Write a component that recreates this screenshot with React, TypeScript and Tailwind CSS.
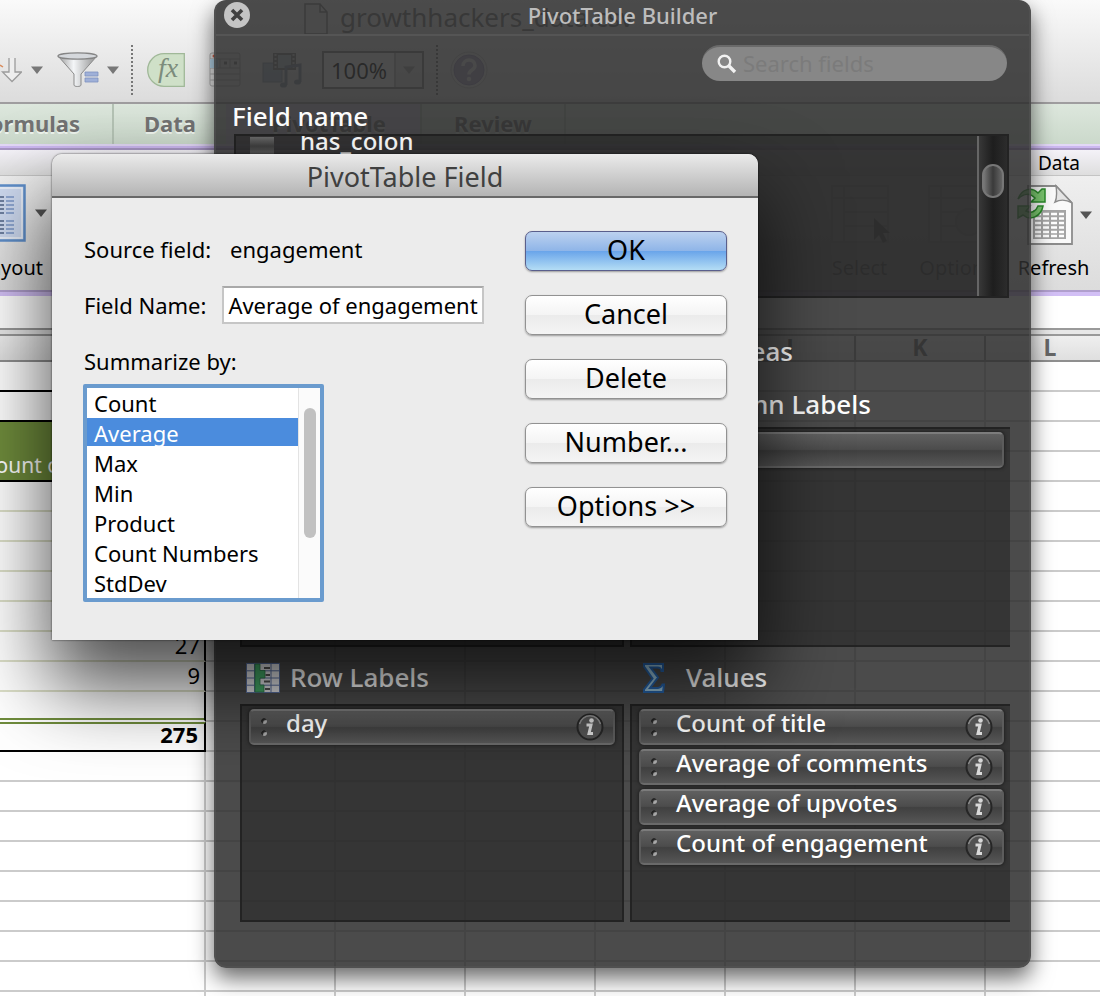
import type { ReactNode } from "react";

function Caret({ className = "" }: { className?: string }) {
  return (
    <svg viewBox="0 0 12 8" className={`h-2 w-3 shrink-0 ${className}`} aria-hidden="true">
      <path d="M0 0.5H12L6 8Z" fill="currentColor" />
    </svg>
  );
}

function SortIcon() {
  return (
    <svg viewBox="0 0 22 26" className="h-[26px] w-[22px] shrink-0" aria-hidden="true">
      <path d="M0 8L3 10" stroke="#d98a5a" strokeWidth="1.500" />
      <path d="M9 1V15H2.500L12 24.500 21.500 15H15V1" fill="#eee" stroke="#9c9c9c" strokeWidth="1.300" />
    </svg>
  );
}

function FunnelIcon() {
  return (
    <svg viewBox="0 0 42 36" className="h-9 w-[42px] shrink-0" aria-hidden="true">
      <defs>
        <linearGradient id="funnel" x1="0" x2="1">
          <stop offset="0" stopColor="#9a9a9a" />
          <stop offset=".4" stopColor="#f4f6f8" />
          <stop offset="1" stopColor="#8f8f8f" />
        </linearGradient>
      </defs>
      <path d="M1 4L17 22v11c0 2 7 2 7 0V22L40 4Z" fill="url(#funnel)" stroke="#8a8a8a" />
      <ellipse cx="20.500" cy="4" rx="19.500" ry="3.200" fill="#d5d8dc" stroke="#858585" strokeWidth="1.300" />
      <path d="M28 20h13v4H28ZM28 26h13v4H28Z" fill="#9fb0d8" stroke="#7f92c0" strokeWidth=".8" />
    </svg>
  );
}

function FxIcon() {
  return (
    <svg viewBox="0 0 38 34" className="h-[34px] w-[38px] shrink-0" aria-hidden="true">
      <path d="M17 .7H37.300V33.300H17A16.300 16.300 0 0 1 17 .7Z" fill="#cfe0c8" stroke="#a0b898" strokeWidth="1.300" />
      <text x="11" y="24" fontFamily="Liberation Serif, serif" fontStyle="italic" fontSize="28" fill="#7c8c7c">fx</text>
    </svg>
  );
}

function CalendarIcon() {
  return (
    <svg viewBox="0 0 32 36" className="h-9 w-8 shrink-0" aria-hidden="true">
      <rect x="1" y="1" width="30" height="33" rx="2" fill="#e4e4e4" stroke="#aaa" />
      <path d="M1 7H31M1 16H31M1 22H31M1 28H31M11 7V16M21 7V16" stroke="#aaa" fill="none" />
      <rect x="1" y="7" width="8" height="9" fill="#b5d4e8" />
      <circle cx="5" cy="4" r="1.500" fill="#d0604a" />
      <path d="M15 11h3M25 11h3" stroke="#777" strokeWidth="3" />
    </svg>
  );
}

function MediaIcon() {
  return (
    <svg viewBox="0 0 40 36" className="h-9 w-10 shrink-0 opacity-65" aria-hidden="true">
      <rect x="1" y="11" width="19" height="19" fill="#8fa5bd" stroke="#66788c" />
      <rect x="11" y="1" width="23" height="17" fill="#555" />
      <rect x="16" y="3" width="13" height="13" fill="#a9bcc8" />
      <path d="M13.500 2V18M31.500 2V18" stroke="#ccc" strokeWidth="2" strokeDasharray="2 2" />
      <path d="M24 33V15L38 13V30" fill="none" stroke="#5a6a86" strokeWidth="3" />
      <ellipse cx="21.500" cy="33" rx="3.500" ry="2.600" fill="#5a6a86" />
      <ellipse cx="35.500" cy="30" rx="3.500" ry="2.600" fill="#5a6a86" />
    </svg>
  );
}

function HelpIcon() {
  return (
    <svg viewBox="0 0 38 38" className="h-[38px] w-[38px] shrink-0" aria-hidden="true">
      <circle cx="19" cy="19" r="18" fill="#e6e6e6" stroke="#c4c4c4" />
      <circle cx="19" cy="19" r="15" fill="#b1a9c8" stroke="#9d94b8" />
      <path d="M13 15c0-8 12-8 12-.5 0 5-6 4-6 9" fill="none" stroke="#f0f0f0" strokeWidth="3.500" />
      <circle cx="19" cy="28" r="2.200" fill="#f0f0f0" />
    </svg>
  );
}

function LayoutIcon() {
  return (
    <svg viewBox="0 0 60 58" className="h-[58px] w-[60px] shrink-0" aria-hidden="true">
      <rect x="1.500" y="1.500" width="57" height="55" fill="#cdd9ef" stroke="#5f8fca" strokeWidth="2.500" />
      <rect x="4" y="4" width="52" height="50" fill="none" stroke="#f0f4fb" strokeWidth="1.500" />
      <path d="M6 13H38M6 17H38M6 21H38M6 25H38M6 29H38M6 37H38M6 41H38M6 45H38M6 49H38" stroke="#6d7f9f" strokeWidth="2" />
      <path d="M40 13H48M40 17H48M40 21H48M40 25H48M40 29H48M40 37H48M40 41H48M40 45H48M40 49H48" stroke="#8ea6d0" strokeWidth="2" />
    </svg>
  );
}

function GridIcon({ children }: { children?: ReactNode }) {
  return (
    <svg viewBox="0 0 60 60" className="h-[60px] w-[60px] shrink-0" aria-hidden="true">
      <path d="M2 2H58V58H2ZM2 14H58M14 2V58M14 28H58M14 42H58" fill="#e6e6e6" stroke="#c2c2c2" strokeWidth="2" />
      {children}
    </svg>
  );
}

function RefreshIcon() {
  return (
    <svg viewBox="0 0 58 62" className="h-[62px] w-[58px] shrink-0" aria-hidden="true">
      <path d="M12 2H40L56 19V60H12Z" fill="#fafafa" stroke="#8c8c8c" strokeWidth="1.800" />
      <path d="M40 2C41 9 41 14 39 18C45 15 51 16 56 19Z" fill="#e4e4e4" stroke="#8c8c8c" strokeWidth="1.400" />
      <rect x="17" y="26" width="33" height="29" fill="#a5a5a5" />
      <path d="M19 30H25M27 30H33M35 30H41M43 30H48M19 34.500H25M27 34.500H33M35 34.500H41M43 34.500H48M19 39H25M27 39H33M35 39H41M43 39H48M19 43.500H25M27 43.500H33M35 43.500H41M43 43.500H48M19 48H25M27 48H33M35 48H41M43 48H48M19 52H25M27 52H33M35 52H41M43 52H48" stroke="#fff" strokeWidth="2.600" />
      <path d="M2 15C6 4 16 3 22 9L26 5L29 5V18H15L19 14C14 9 8 9 2 15Z" fill="#7cc870" stroke="#2b8a2b" strokeWidth="1.500" />
      <path d="M27 22C25 33 14 37 7 31L2 34V22H14L10 27C16 30 20 27 22 22Z" fill="#7cc870" stroke="#2b8a2b" strokeWidth="1.500" />
    </svg>
  );
}

function RowLabelsIcon() {
  return (
    <svg viewBox="0 0 34 30" className="h-[30px] w-[34px] shrink-0" aria-hidden="true">
      <rect x=".5" y=".5" width="33" height="29" fill="#e4e5e8" />
      <path d="M.5 .5H33.500V29.500H.5ZM.5 7.800H33.500M.5 15H33.500M.5 22.200H33.500M8.500 0V30M25 0V30" fill="none" stroke="#5a70a0" strokeWidth="1" />
      <path d="M9 1H14V7.500H19V15H14V22H18V29H9Z" fill="#46ad6a" stroke="#2f7a49" strokeWidth=".8" />
      <path d="M18 5H24M19.500 12H24M18 18.500H24M19 26H24" stroke="#555" strokeWidth="2" />
    </svg>
  );
}

function SigmaIcon() {
  return (
    <svg viewBox="0 0 24 32" className="h-8 w-6 shrink-0" aria-hidden="true">
      <path d="M2 2H21V9H19.500C19 6 18 5.500 15.500 5.500H8.500L16 15.500L8 26H16C18.500 26 19.500 25 20.500 22.500H22L21 30H2V27.500L10.500 16.500L2 4.500Z" fill="#9cc6dd" stroke="#2765ad" strokeWidth="2" />
    </svg>
  );
}

function InfoIcon() {
  return (
    <svg viewBox="0 0 30 30" className="h-[30px] w-[30px]" aria-hidden="true">
      <circle cx="15" cy="15" r="12.500" fill="#525252" stroke="#262626" strokeWidth="2" />
      <path d="M4.500 12A10.800 10.800 0 0 1 25.500 12" fill="none" stroke="#8a8a8a" strokeWidth="1.500" />
      <circle cx="16.500" cy="8.500" r="2.300" fill="#d8d8d8" />
      <path d="M11.500 13H16L14 21.500H18" fill="none" stroke="#d8d8d8" strokeWidth="3" />
    </svg>
  );
}

function Pill({ label }: { label?: string }) {
  return (
    <li className="flex h-9 items-center rounded-[5px] border-2 border-t-[#7c7c7c] border-r-[#5c5c5c] border-b-[#6a6a6a] border-l-[#5c5c5c] bg-[linear-gradient(#606060_0%,#4c4c4c_48%,#404040_52%,#565656_100%)] shadow-[0_0_3px_1px_#222]">
      {label && (
        <>
          <span className="flex w-[35px] shrink-0 flex-col items-start gap-1.5 pl-2.5" aria-hidden="true">
            <span className="size-1.5 rounded-full bg-[#aaa] shadow-[inset_2px_2px_1px_#222]" />
            <span className="size-1.5 rounded-full bg-[#aaa] shadow-[inset_2px_2px_1px_#222]" />
          </span>
          <span className="grow pb-2 text-[24px] leading-6 font-medium text-white">{label}</span>
          <button type="button" aria-label={`Settings for ${label}`} className="mr-2">
            <InfoIcon />
          </button>
        </>
      )}
    </li>
  );
}

function AreaBox({ items, open, tall }: { items: (string | undefined)[]; open?: boolean; tall?: boolean }) {
  return (
    <ul
      className={`flex flex-col gap-1 border-2 border-[#232323] bg-[#292929]/65 pt-[3px] pl-[7px] ${tall ? "h-[220px]" : "h-[218px]"} ${open ? "border-r-0 pr-1.5" : "pr-[7px]"}`}
    >
      {items.map((item, i) => (
        <Pill key={i} label={item} />
      ))}
    </ul>
  );
}

function Toolbar() {
  return (
    <header className="h-[104px] border-b-2 border-[#9f9d9f] bg-linear-to-b from-[#fafafa] to-[#dcdcdc]">
      <div className="flex h-[38px] items-center gap-2 pl-[304px] text-[26px] text-[#777]">
        <svg viewBox="0 0 24 32" className="h-8 w-6" aria-hidden="true">
          <path d="M1 1H16L23 9V31H1ZM16 1V9H23" fill="#f0f0f0" stroke="#888" strokeWidth="1.500" />
        </svg>
        <span className="pb-1 pl-1">growthhackers_data.csv</span>
      </div>
      <div className="flex h-16 items-center">
        <SortIcon />
        <Caret className="ml-[9px] text-[#777]" />
        <div className="ml-3.5">
          <FunnelIcon />
        </div>
        <Caret className="ml-2 text-[#777]" />
        <div className="ml-3 h-[50px] border-l-2 border-dotted border-[#777]" />
        <div className="ml-3.5">
          <FxIcon />
        </div>
        <div className="ml-6">
          <CalendarIcon />
        </div>
        <div className="ml-[21px]">
          <MediaIcon />
        </div>
        <div className="ml-5 flex h-[38px] border-2 border-[#888]">
          <span className="flex w-[70px] items-center justify-center bg-white text-[22px] text-[#111]">100%</span>
          <span className="flex w-7 items-center justify-center border-l-2 border-[#bbb]">
            <Caret className="text-[#aaa]" />
          </span>
        </div>
        <div className="ml-3 h-[50px] border-l-2 border-dotted border-[#777]" />
        <div className="ml-3">
          <HelpIcon />
        </div>
      </div>
    </header>
  );
}

function Ribbon() {
  return (
    <>
      <nav className="flex h-10 items-stretch bg-linear-to-b from-[#dde7dd] to-[#cbd9cb] text-[22px] leading-[38px] font-bold text-[#727272] [text-shadow:0_2px_0_#eef4ee]">
        <a href="#formulas" className="flex w-[114px] justify-end overflow-hidden border-r-2 border-[#b4c2b4] pr-8">Formulas</a>
        <a href="#data" className="flex w-[112px] justify-center">Data</a>
        <a href="#pivottable" className="flex w-[196px] justify-center border-r-2 border-[#b4c2b4] bg-[#d6cde0]">
          <span className="pl-3">PivotTable</span>
        </a>
        <a href="#review" className="flex w-36 justify-center border-r-2 border-[#b4c2b4]">Review</a>
      </nav>
      <div className="h-1.5 border-t-2 border-b-2 border-t-[#e2d8f6] border-b-[#a796c4] bg-[#ccb8f0]" />
      <div className="flex h-[26px] justify-end border-b border-[#c4c4c4] bg-linear-to-b from-[#f4f2f8] to-[#dedede] pr-5 text-[19px] leading-[26px] text-black">
        Data
      </div>
      <div className="flex h-[114px] justify-between overflow-hidden bg-linear-to-b from-[#efefef] to-[#dcdcdc] text-[20px] leading-7">
        <div className="flex w-[47px] flex-col items-end pt-2">
          <div className="flex items-center justify-end gap-[9px]">
            <LayoutIcon />
            <Caret className="text-[#555]" />
          </div>
          <span className="mt-3 pr-1">Layout</span>
        </div>
        <div className="-mr-0.5 flex shrink-0">
          <div className="flex w-[97px] flex-col items-center pt-2 text-[#555]">
            <GridIcon>
              <path d="M44 34V56L49 51L53 59L57 57L53 49H60Z" fill="#666" />
            </GridIcon>
            <span className="mt-2.5">Select</span>
          </div>
          <div className="flex w-[97px] flex-col items-center pt-2 text-[#555]">
            <GridIcon>
              <circle cx="42" cy="38" r="13" fill="#ddd" stroke="#bbb" strokeWidth="2" />
            </GridIcon>
            <span className="mt-2.5">Options</span>
          </div>
          <div className="flex w-[97px] flex-col items-center pt-2">
            <div className="flex items-center gap-1.5">
              <RefreshIcon />
              <Caret className="text-[#555]" />
            </div>
            <span className="mt-2">Refresh</span>
          </div>
        </div>
      </div>
      <div className="h-1.5 border-t-2 border-[#b09fcd] bg-[#d2bff5]" />
    </>
  );
}

const columns = ["", "G", "H", "I", "J", "K", "L"];
const blank = columns.map((_, i) => i);

function Cells() {
  return (
    <>
      {blank.map((i) => (
        <td key={i} className="border-r-2 border-b-2 border-[#cbcbcb]" />
      ))}
    </>
  );
}

const valueCell = "border-r-2 border-b-2 border-r-black border-b-[#dcdfc8] pr-1 text-right align-top text-[22px] leading-[26px]";

function Sheet() {
  const values = ["", "", "", "", "", "27", "9"];
  return (
    <table className="w-[1116px] table-fixed border-separate border-spacing-0">
      <colgroup>
        <col className="w-[206px]" />
        {blank.map((i) => (
          <col key={i} className="w-[130px]" />
        ))}
      </colgroup>
      <thead>
        <tr className="h-[26px] bg-linear-to-b from-[#efefef] to-[#dedede] text-[23px] leading-[22px] text-[#666]">
          <th className="h-[26px] border-r-2 border-b-2 border-[#8f8f8f]" />
          {columns.map((c, i) => (
            <th key={i} className="h-[26px] border-r-2 border-b-2 border-[#8f8f8f] p-0 align-top">{i < 4 ? "" : c}</th>
          ))}
        </tr>
      </thead>
      <tbody>
        <tr className="h-[30px]">
          <td className="border-b-2 border-black" />
          <Cells />
        </tr>
        <tr className="h-[30px]">
          <td className="border-r-2 border-b-2 border-black" />
          <Cells />
        </tr>
        <tr className="h-[30px]">
          <td rowSpan={2} className="border-r-2 border-b-2 border-black bg-[#6f8c3c] p-0 align-bottom text-[21px] leading-[30px] text-white">
            <div className="flex w-[60px] justify-end overflow-hidden whitespace-nowrap">Count o</div>
          </td>
          <Cells />
        </tr>
        <tr className="h-[30px]">
          <Cells />
        </tr>
        {values.map((v, i) => (
          <tr key={i} className="h-[30px]">
            <td className={`${valueCell} py-0`}>{v}</td>
            <Cells />
          </tr>
        ))}
        <tr className="h-[30px]">
          <td className="border-r-2 border-b-2 border-r-black border-b-white shadow-[inset_0_-2px_0_#6f8c3c]" />
          <Cells />
        </tr>
        <tr className="h-[30px]">
          <td className="border-t-2 border-r-2 border-b-2 border-t-[#6f8c3c] border-r-black border-b-black py-0 pr-1.5 text-right align-top text-[22px] leading-5 font-bold">275</td>
          <Cells />
        </tr>
        {blank.concat(7, 8).map((i) => (
          <tr key={i} className="h-[30px]">
            <td className="border-r-2 border-b-2 border-[#cbcbcb]" />
            <Cells />
          </tr>
        ))}
      </tbody>
    </table>
  );
}

function BuilderPanel() {
  return (
    <aside className="absolute top-0 left-[214px] h-[968px] w-[817px] rounded-xl border-x-2 border-b-2 border-[#555]/60 bg-[#2d2d2d]/86 shadow-[0_10px_22px_rgba(0,0,0,0.6)]">
      <div className="flex h-9 items-center border-b-2 border-[#555] pl-2">
        <button type="button" aria-label="Close" className="mb-1">
          <svg viewBox="0 0 26 26" className="size-[26px]" aria-hidden="true">
            <circle cx="13" cy="13" r="13" fill="#c4c4c4" />
            <path d="M8 8L18 18M18 8L8 18" stroke="#404040" strokeWidth="3.600" />
          </svg>
        </button>
        <h2 className="grow pr-[34px] pb-1 text-center text-[22px] leading-8 font-medium text-[#bdbdbd]">PivotTable Builder</h2>
      </div>
      <div className="flex justify-end pt-[9px] pr-[22px]">
        <label className="flex h-9 w-[305px] items-center gap-1.5 rounded-full border-t-2 border-[#6a6a6a] bg-[#878787] pl-[15px]">
          <svg viewBox="0 0 20 20" className="size-5 shrink-0" aria-hidden="true">
            <circle cx="7.500" cy="7.500" r="5.800" fill="none" stroke="#f2f2f2" strokeWidth="2.400" />
            <path d="M12 12L18 18" stroke="#f2f2f2" strokeWidth="3.400" />
          </svg>
          <input aria-label="Search fields" placeholder="Search fields" className="min-w-0 grow bg-transparent pb-0.5 text-[22px] leading-8 outline-none placeholder:text-[#7b7b7b]" />
        </label>
      </div>
      <h3 className="pt-[19px] pb-px pl-4 text-[26px] leading-8 font-medium text-white">Field name</h3>
      <div className="mt-px mr-5 ml-[18px] flex h-[164px] border-2 border-[#232323] bg-[#292929]/65">
        <label className="flex h-[19px] grow items-end gap-[26px] overflow-hidden pl-3.5 text-[24px] leading-7 font-medium text-white">
          <input type="checkbox" className="h-[18px] w-6 appearance-none bg-linear-to-b from-[#6a6a6a] via-[#404040] to-[#5a5a5a]" />
          has_colon
        </label>
        <div className="w-[30px] border-l-2 border-[#666] bg-linear-to-r from-[#383838] via-[#1e1e1e] to-[#2c2c2c] pt-7">
          <div className="mx-auto h-[34px] w-[22px] rounded-full border-2 border-[#777] bg-linear-to-r from-[#777] via-[#3a3a3a] to-[#666]" />
        </div>
      </div>
      <h3 className="w-[577px] pt-[37px] pb-px text-right text-[26px] leading-8 font-medium text-white">Drag fields between areas</h3>
      <div className="grid grid-cols-[384px_380px] gap-x-1.5 pl-6">
        <div className="pt-[59px]">
          <AreaBox items={[]} tall />
        </div>
        <div>
          <h4 className="flex h-[59px] items-center pt-3.5 pl-[58px] text-[26px] font-medium text-white">Column Labels</h4>
          <AreaBox items={[undefined]} open tall />
        </div>
        <h4 className="flex h-[57px] items-center gap-2.5 pt-1 pl-1.5 text-[26px] font-medium text-white">
          <RowLabelsIcon />
          Row Labels
        </h4>
        <h4 className="flex h-[57px] items-center gap-5 pt-1 pl-3 text-[26px] font-medium text-white">
          <SigmaIcon />
          Values
        </h4>
        <AreaBox items={["day"]} />
        <AreaBox items={["Count of title", "Average of comments", "Average of upvotes", "Count of engagement"]} open />
      </div>
    </aside>
  );
}

const functions = ["Count", "Average", "Max", "Min", "Product", "Count Numbers", "StdDev"];

function PushButton({ children, primary }: { children: ReactNode; primary?: boolean }) {
  return (
    <button
      type="button"
      className={`h-10 w-[202px] rounded-[7px] border pb-0.5 text-[27px] leading-9 shadow-[0_1px_2px_rgba(0,0,0,0.35)] ${
        primary
          ? "border-[#5a5f8c] bg-[linear-gradient(#bcd1ef_0%,#8fb5e8_49%,#6aa5ea_51%,#b4ddf5_100%)]"
          : "border-[#929292] bg-[linear-gradient(#ffffff_0%,#f4f4f4_49%,#ebebeb_51%,#f4f4f4_100%)]"
      }`}
    >
      {children}
    </button>
  );
}

function FieldDialog() {
  return (
    <section
      role="dialog"
      aria-label="PivotTable Field"
      className="absolute top-[154px] left-[52px] w-[706px] rounded-t-[10px] bg-[#ececec] shadow-[0_0_2px_rgba(0,0,0,0.8),0_44px_80px_4px_rgba(0,0,0,0.7)]"
    >
      <h1 className="h-11 rounded-t-[10px] border-b-2 border-[#686868] bg-linear-to-b from-[#ebebeb] to-[#b4b4b4] text-center text-[27px] leading-[46px] text-[#404040]">
        PivotTable Field
      </h1>
      <form className="flex justify-between pt-[33px] pr-[31px] pb-[38px] pl-8 text-[22px] leading-7 text-black">
        <div className="flex flex-col">
          <p className="flex gap-[19px] pt-1">
            <span>Source field:</span>
            <span>engagement</span>
          </p>
          <div className="mt-[23px] flex items-center gap-4">
            <label htmlFor="field-name">Field Name:</label>
            <input
              id="field-name"
              defaultValue="Average of engagement"
              className="h-[38px] w-[262px] border-2 border-[#c6c6c6] border-t-[#a9a9a9] bg-white px-1 text-[22px] outline-none"
            />
          </div>
          <label htmlFor="summarize" className="mt-[23px]">Summarize by:</label>
          <div className="mt-[9px] -ml-px flex h-[218px] w-[241px] rounded-xs border-4 border-[#6a9bce] bg-white">
            <select
              id="summarize"
              size={7}
              defaultValue="Average"
              className="h-[210px] grow appearance-none overflow-hidden bg-white outline-none"
            >
              {functions.map((f) => (
                <option
                  key={f}
                  value={f}
                  className="h-[30px] px-[7px] py-0 text-[22px] leading-8 text-black checked:bg-[linear-gradient(#4b8cdd_28px,#ffffff_28px)] checked:[-webkit-text-fill-color:#ffffff]"
                >
                  {f}
                </option>
              ))}
            </select>
            <div className="w-[22px] border-l border-[#e3e3e3] bg-[#fbfbfb] pt-5">
              <div className="mx-auto h-[130px] w-3 rounded-full bg-[#c1c1c1]" />
            </div>
          </div>
        </div>
        <div className="flex flex-col gap-6">
          <PushButton primary>OK</PushButton>
          <PushButton>Cancel</PushButton>
          <PushButton>Delete</PushButton>
          <PushButton>Number...</PushButton>
          <PushButton>Options &gt;&gt;</PushButton>
        </div>
      </form>
    </section>
  );
}

export default function App() {
  return (
    <main className="relative h-screen overflow-hidden bg-white font-['Noto_Sans',sans-serif] text-black">
      <Toolbar />
      <Ribbon />
      <div className="h-8 bg-white" />
      <div className="h-2 border-y-2 border-[#9a9a9a] bg-[#e8e8e8]" />
      <Sheet />
      <BuilderPanel />
      <FieldDialog />
    </main>
  );
}
